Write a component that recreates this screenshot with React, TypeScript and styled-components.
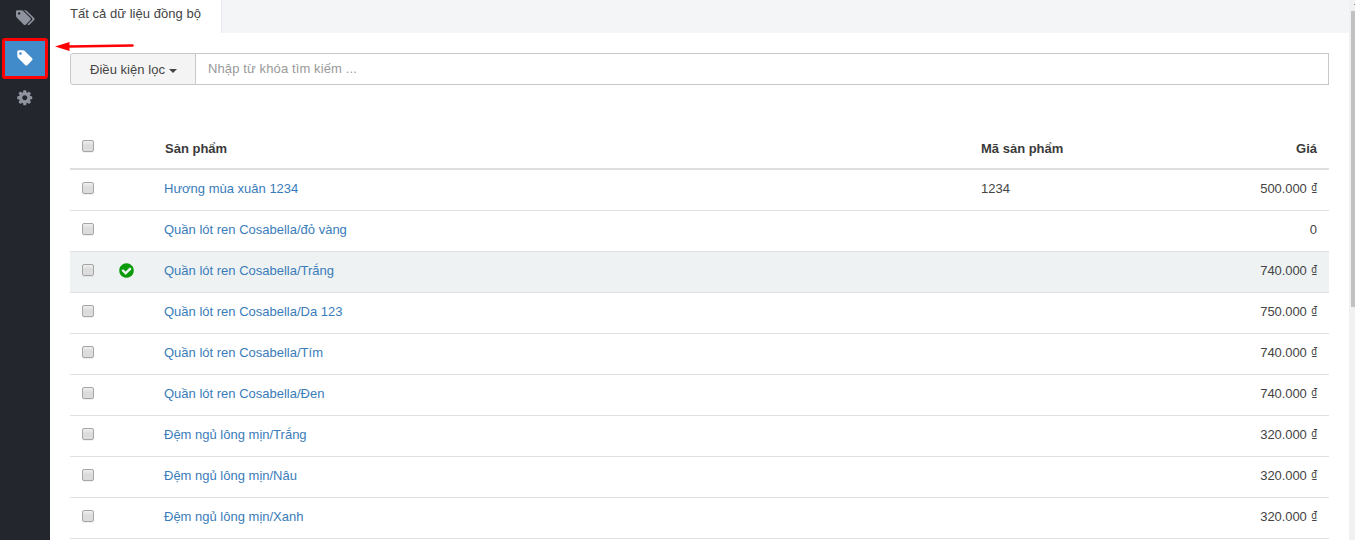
import React from 'react';
import styled, { createGlobalStyle } from 'styled-components';

const GlobalStyle = createGlobalStyle`
  * { box-sizing: border-box; }
  body {
    margin: 0;
    background: #fff;
    color: #444;
    font: 13px/18px "Liberation Sans", Arial, sans-serif;
    overflow: hidden;
  }
`;

const Page = styled.div`
  display: flex;
  height: 540px;
  overflow: hidden;
`;

const Sidebar = styled.nav`
  position: relative;
  flex: none;
  width: 50px;
  background: #23262d;
  display: flex;
  flex-direction: column;
  padding: 0 2px;
`;

const NavItem = styled.a<{ $active?: boolean; $lift?: number }>`
  flex: none;
  display: flex;
  align-items: center;
  justify-content: center;
  height: ${p => (p.$active ? 41 : 38)}px;
  padding-bottom: ${p => p.$lift ?? 0}px;
  color: ${p => (p.$active ? '#fff' : '#8f939e')};
  background: ${p => (p.$active ? '#428bca' : 'transparent')};
  border: ${p => (p.$active ? '3px solid #fe0000' : '0')};
  border-radius: 3px;
`;

const Glyph = styled.svg<{ $size: number }>`
  display: block;
  flex: none;
  width: ${p => p.$size}px;
  height: ${p => p.$size}px;
  fill: currentColor;
  overflow: visible;
`;

const Pointer = styled.svg`
  position: absolute;
  left: 54px;
  top: 40px;
  width: 82px;
  height: 12px;
`;

const Main = styled.main`
  flex: 1;
  min-width: 0;
`;

const TabBar = styled.div`
  height: 33px;
  background: #f4f5f7;
  display: flex;
`;

const Tab = styled.div`
  width: 172px;
  padding: 5px 0 0 20px;
  background: #fff;
  border-right: 1px solid #e9ebee;
  white-space: nowrap;
  letter-spacing: 0.04px;
`;

const FilterBar = styled.div`
  display: flex;
  height: 32px;
  margin: 20px 20px 0;
`;

const FilterButton = styled.button`
  width: 126px;
  padding: 1px 0 0 1px;
  display: flex;
  align-items: center;
  justify-content: center;
  gap: 4px;
  font: inherit;
  letter-spacing: 0.04px;
  color: #444;
  background: #f4f4f4;
  border: 1px solid #c8c8c8;
  border-radius: 3px 0 0 3px;
`;

const Caret = styled.span`
  margin-top: 2px;
  border: 4px solid transparent;
  border-top-color: #444;
  border-bottom: 0;
`;

const SearchInput = styled.input`
  flex: 1;
  padding: 0 12px 1px;
  font: inherit;
  letter-spacing: 0.12px;
  border: 1px solid #c8c8c8;
  border-left: 0;
  border-radius: 0;
  outline: 0;
  &::placeholder { color: #999; opacity: 1; }
`;

const Table = styled.div`
  margin: 42px 20px 0;
`;

const Row = styled.div<{ $selected?: boolean }>`
  display: grid;
  grid-template-columns: 36px 46px 817px 1fr 100px;
  height: 41px;
  padding: 0 12px;
  border-bottom: 1px solid #dfe1e2;
  background: ${p => (p.$selected ? '#eef2f3' : 'transparent')};
`;

const HeaderRow = styled(Row)`
  height: 43px;
  font-weight: 700;
  color: #3a3a3a;
  border-bottom: 2px solid #dedede;
`;

const Cell = styled.div<{ $right?: boolean }>`
  padding-top: 10px;
  white-space: nowrap;
  text-align: ${p => (p.$right ? 'right' : 'left')};
`;

const HeadCell = styled(Cell)<{ $indent?: boolean }>`
  padding-top: 13px;
  padding-left: ${p => (p.$indent ? 1 : 0)}px;
`;

const PriceCell = styled(Cell)`
  text-align: right;
  letter-spacing: -0.07px;
`;

const Currency = styled.span`
  margin-left: 1px;
  font: 10px/1 Roboto, sans-serif;
  vertical-align: 2px;
  line-height: 0;
`;

const ProductLink = styled.a`
  color: #3a7cba;
`;

const StatusCell = styled(Cell)`
  color: #0a9b0a;
`;

const CheckCell = styled.div<{ $head?: boolean }>`
  padding-top: ${p => (p.$head ? 13 : 12)}px;
`;

const Checkbox = styled.input.attrs({ type: 'checkbox' })`
  appearance: none;
  display: block;
  width: 12px;
  height: 12px;
  margin: 0;
  border: 1px solid #a6a6a6;
  border-radius: 2px;
  background: linear-gradient(#eee, #dcdcdc 45%);
  box-shadow: 0 1px 0 rgba(0, 0, 0, 0.06);
`;

const ScrollTrack = styled.div`
  flex: none;
  width: 6px;
  background: #f1f1f1;
  padding-left: 2px;
`;

const ScrollArrow = styled.div`
  width: 1px;
  height: 1px;
  margin: 4px 0 6px 3px;
  background: #8a8a8a;
`;

const ScrollThumb = styled.div`
  height: 296px;
  background: #c1c1c1;
`;

const TAG = 'M576 448q0-53-37.5-90.5t-90.5-37.5-90.5 37.5-37.5 90.5 37.5 90.5 90.5 37.5 90.5-37.5 37.5-90.5zm1067 576q0 53-37 90l-491 492q-39 37-91 37-53 0-90-37l-715-716q-38-37-64.5-101t-26.5-117v-416q0-52 38-90t90-38h416q53 0 117 26.5t102 64.5l715 714q37 39 37 91z';
const TAGS = 'M448 448q0-53-37.5-90.5t-90.5-37.5-90.5 37.5-37.5 90.5 37.5 90.5 90.5 37.5 90.5-37.5 37.5-90.5zm1067 576q0 53-37 90l-491 492q-39 37-91 37-53 0-90-37l-715-716q-38-37-64.5-101t-26.5-117v-416q0-52 38-90t90-38h416q53 0 117 26.5t102 64.5l715 714q37 39 37 91zm384 0q0 53-37 90l-491 492q-39 37-91 37-36 0-59-14t-53-45l470-470q37-37 37-90 0-52-37-91l-715-714q-38-38-102-64.5t-117-26.5h224q53 0 117 26.5t102 64.5l715 714q37 39 37 91z';
const COG = 'M1152 896q0-106-75-181t-181-75-181 75-75 181 75 181 181 75 181-75 75-181zm512-109v222q0 12-8 23t-20 13l-185 28q-19 54-39 91 35 50 107 138 10 12 10 25t-9 23q-27 37-99 108t-94 71q-12 0-26-9l-138-108q-44 23-91 38-16 136-29 186-7 28-36 28h-222q-14 0-24.5-8.5t-11.5-21.5l-28-184q-49-16-90-37l-141 107q-10 9-25 9-14 0-25-11-126-114-165-168-7-10-7-23 0-12 8-23 15-21 51-66.5t54-70.5q-27-50-41-99l-183-27q-13-2-21-12.5t-8-23.5v-222q0-12 8-23t19-13l186-28q14-46 39-92-40-57-107-138-10-12-10-24 0-10 9-23 26-36 98.5-107.5t94.5-71.5q13 0 26 10l138 107q44-23 91-38 16-136 29-186 7-28 36-28h222q14 0 24.5 8.5t11.5 21.5l28 184q49 16 90 37l142-107q9-9 24-9 13 0 25 10 129 119 165 170 7 8 7 22 0 12-8 23-15 21-51 66.5t-54 70.5q26 50 41 98l183 28q13 2 21 12.5t8 23.5z';
const CHECK = 'M1412 734q0-28-18-46l-91-90q-19-19-45-19t-45 19l-408 407-226-226q-19-19-45-19t-45 19l-91 90q-18 18-18 46 0 27 18 45l362 362q19 19 45 19 27 0 46-19l543-543q18-18 18-45zm252 162q0 209-103 385.5t-279.500 279.500-385.500 103-385.500-103-279.500-279.500-103-385.500 103-385.500 279.500-279.500 385.500-103 385.500 103 279.500 279.500 103 385.500z';

const Icon = ({ d, size = 18 }: { d: string; size?: number }) => (
  <Glyph $size={size} viewBox="0 0 1792 1792">
    <path d={d} />
  </Glyph>
);

type Product = { name: string; code?: string; price: string; free?: boolean; synced?: boolean };

const products: Product[] = [
  { name: 'Hương mùa xuân 1234', code: '1234', price: '500.000' },
  { name: 'Quần lót ren Cosabella/đỏ vàng', price: '0', free: true },
  { name: 'Quần lót ren Cosabella/Trắng', price: '740.000', synced: true },
  { name: 'Quần lót ren Cosabella/Da 123', price: '750.000' },
  { name: 'Quần lót ren Cosabella/Tím', price: '740.000' },
  { name: 'Quần lót ren Cosabella/Đen', price: '740.000' },
  { name: 'Đệm ngủ lông mịn/Trắng', price: '320.000' },
  { name: 'Đệm ngủ lông mịn/Nâu', price: '320.000' },
  { name: 'Đệm ngủ lông mịn/Xanh', price: '320.000' },
];

export default function App() {
  return (
    <Page>
      <GlobalStyle />
      <Sidebar>
        <NavItem $lift={2}><Icon d={TAGS} size={17.5} /></NavItem>
        <NavItem $active $lift={1}><Icon d={TAG} /></NavItem>
        <NavItem><Icon d={COG} size={17.5} /></NavItem>
        <Pointer viewBox="0 0 82 12">
          <path d="M1 6.400 15.500 2v3.200L78.500 4.200a1.300 1.300 0 0 1 0 2.600L15.500 7.800v3.200z" fill="#fe0000" />
        </Pointer>
      </Sidebar>
      <Main>
        <TabBar><Tab>Tất cả dữ liệu đồng bộ</Tab></TabBar>
        <FilterBar>
          <FilterButton>Điều kiện lọc<Caret /></FilterButton>
          <SearchInput placeholder="Nhập từ khóa tìm kiếm ..." />
        </FilterBar>
        <Table>
          <HeaderRow>
            <CheckCell $head><Checkbox /></CheckCell>
            <HeadCell />
            <HeadCell $indent>Sản phẩm</HeadCell>
            <HeadCell>Mã sản phẩm</HeadCell>
            <HeadCell $right>Giá</HeadCell>
          </HeaderRow>
          {products.map(p => (
            <Row key={p.name} $selected={p.synced}>
              <CheckCell><Checkbox /></CheckCell>
              <StatusCell>{p.synced && <Icon d={CHECK} size={17} />}</StatusCell>
              <Cell><ProductLink>{p.name}</ProductLink></Cell>
              <Cell>{p.code}</Cell>
              <PriceCell>{p.price}{!p.free && <> <Currency>₫</Currency></>}</PriceCell>
            </Row>
          ))}
        </Table>
      </Main>
      <ScrollTrack><ScrollArrow /><ScrollThumb /></ScrollTrack>
    </Page>
  );
}
